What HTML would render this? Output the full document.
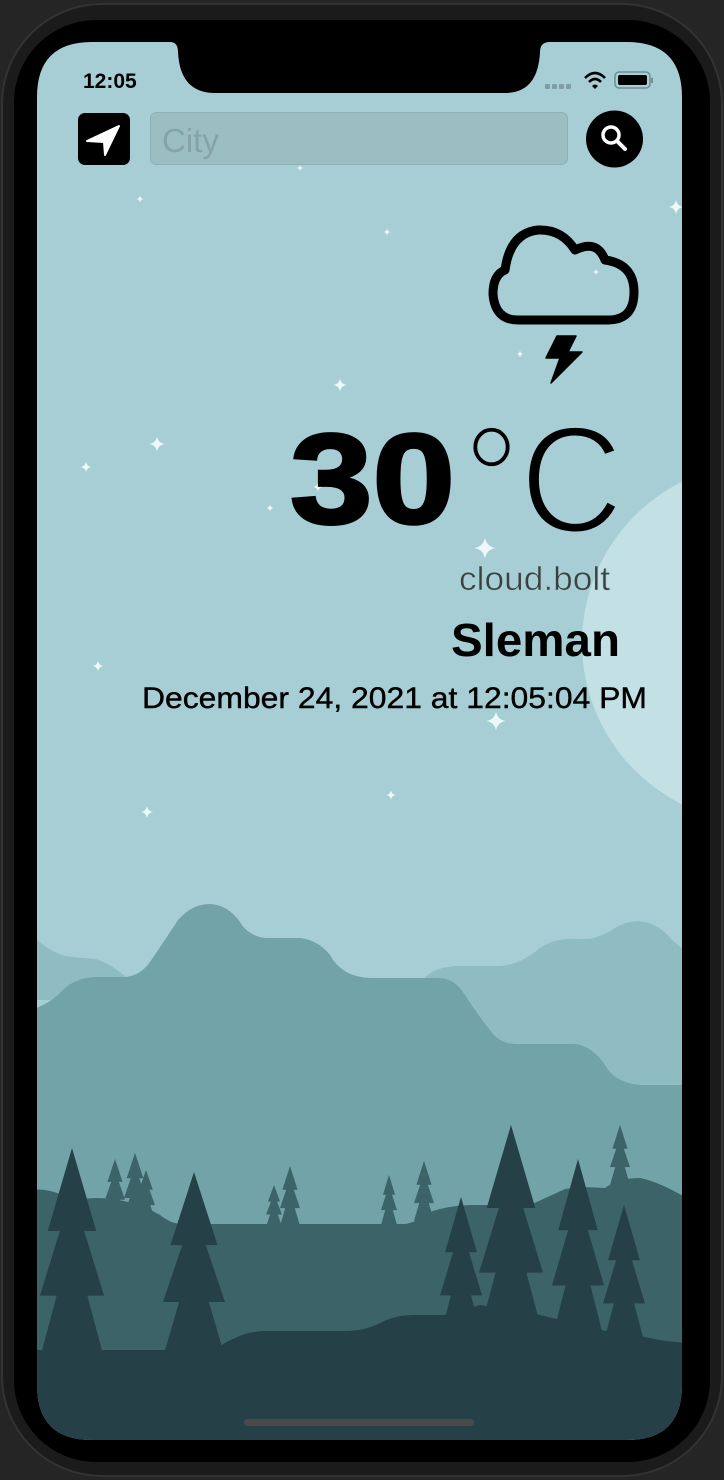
<!DOCTYPE html>
<html><head><meta charset="utf-8"><style>
html,body{margin:0;padding:0;background:#222;}
svg{display:block}
</style></head><body>
<svg width="724" height="1480" viewBox="0 0 724 1480" xmlns="http://www.w3.org/2000/svg">
<defs>
<clipPath id="scr">
<path d="M92,42 H170 Q178,42 178,52 Q180,93 215,93 H505 Q538,93 540,52 Q540,42 550,42 H627 Q682,42 682,97 V1385 Q682,1440 627,1440 H92 Q37,1440 37,1385 V97 Q37,42 92,42 Z"/>
</clipPath>
<path id="t" d="M0,0 L0.38,0.395 L0.19,0.395 L0.5,0.703 L0.24,0.703 L0.5,1 L-0.5,1 L-0.24,0.703 L-0.5,0.703 L-0.19,0.395 L-0.38,0.395 Z"/>
<path id="s" d="M0,-6 Q0.8,-0.8 6,0 Q0.8,0.8 0,6 Q-0.8,0.8 -6,0 Q-0.8,-0.8 0,-6 Z"/>
</defs>
<rect width="724" height="1480" fill="#252525"/>
<rect x="2" y="4" width="720" height="1472" rx="100" fill="#1b1b1b" stroke="#333" stroke-width="2"/>
<rect x="14" y="20" width="696" height="1442" rx="82" fill="#000"/>
<g clip-path="url(#scr)">
<rect x="30" y="40" width="660" height="1410" fill="#a6ced4"/>
<circle cx="762" cy="643" r="180" fill="#c3e1e5"/>
<g fill="#eef8f9">
<use href="#s" transform="translate(300,168) scale(0.5)"/>
<use href="#s" transform="translate(140,199) scale(0.6)"/>
<use href="#s" transform="translate(387,232) scale(0.6)"/>
<use href="#s" transform="translate(676,207) scale(1.2)"/>
<use href="#s" transform="translate(520,122) scale(0.6)"/>
<use href="#s" transform="translate(340,385) scale(1.1)"/>
<use href="#s" transform="translate(157,444) scale(1.3)"/>
<use href="#s" transform="translate(86,467) scale(0.9)"/>
<use href="#s" transform="translate(270,508) scale(0.6)"/>
<use href="#s" transform="translate(520,354) scale(0.6)"/>
<use href="#s" transform="translate(596,272) scale(0.5)"/>
<use href="#s" transform="translate(485,548) scale(1.8)"/>
<use href="#s" transform="translate(98,666) scale(0.9)"/>
<use href="#s" transform="translate(496,721) scale(1.6)"/>
<use href="#s" transform="translate(147,812) scale(1)"/>
<use href="#s" transform="translate(391,795) scale(0.8)"/>
<use href="#s" transform="translate(318,487) scale(0.8)"/>
</g>
<path d="M30,932 Q45,950 65,956 Q80,958 95,959 Q108,962 125,976 V1000 H30 Z" fill="#8fbbc2"/>
<path d="M420,985 Q428,968 455,966 H500 Q520,965 540,948 Q555,938 575,939 H590 Q605,935 615,928 Q630,919 645,922 Q660,925 672,940 L690,955 V1100 H420 Z" fill="#8fbbc2"/>
<path d="M30,1010 Q45,1006 58,995 Q72,978 95,977 H125 Q140,976 150,962 Q165,940 178,920 Q192,904 210,904 Q228,905 240,922 Q248,936 265,938 H300 Q318,940 330,955 Q342,977 370,978 H440 Q455,979 465,995 Q480,1018 490,1030 Q498,1043 515,1044 H575 Q592,1046 605,1065 Q615,1083 640,1085 H690 V1300 H30 Z" fill="#72a3a8"/>
<g fill="#3b6368">
<use href="#t" transform="translate(115,1159) scale(20,58)"/>
<use href="#t" transform="translate(135,1153) scale(22,64)"/>
<use href="#t" transform="translate(146,1170) scale(18,50)"/>
<use href="#t" transform="translate(274,1185) scale(16,42)"/>
<use href="#t" transform="translate(290,1166) scale(20,60)"/>
<use href="#t" transform="translate(389,1175) scale(16,50)"/>
<use href="#t" transform="translate(424,1161) scale(20,60)"/>
<use href="#t" transform="translate(620,1125) scale(20,60)"/>
</g>
<path d="M30,1190 Q45,1188 60,1194 Q78,1200 95,1198 Q130,1198 160,1215 Q170,1223 180,1224 H405 Q418,1222 430,1212 Q450,1205 475,1205 H530 Q550,1196 565,1189 Q580,1186 605,1188 Q618,1178 640,1178 Q660,1182 690,1200 V1400 H30 Z" fill="#3b6368"/>
<g fill="#264047">
<use href="#t" transform="translate(72,1148) scale(64,210)"/>
<use href="#t" transform="translate(194,1172) scale(62,185)"/>
<use href="#t" transform="translate(461,1197) scale(42,140)"/>
<use href="#t" transform="translate(511,1125) scale(64,210)"/>
<use href="#t" transform="translate(578,1159) scale(52,180)"/>
<use href="#t" transform="translate(624,1205) scale(42,140)"/>
</g>
<path d="M30,1350 H215 Q225,1342 235,1338 Q250,1331 265,1331 H345 Q365,1331 380,1323 Q395,1315 415,1315 H445 L480,1305 L540,1315 L600,1330 L645,1337 Q665,1342 690,1343 V1450 H30 Z" fill="#264047"/>
<rect x="244" y="1419" width="230" height="7" rx="3.5" fill="#4a4a4a"/>
</g>
<text x="83" y="88" font-family="Liberation Sans, sans-serif" font-weight="bold" font-size="21" fill="#000">12:05</text>
<g fill="#7f9da2"><rect x="545" y="84" width="5" height="5" rx="1"/><rect x="552" y="84" width="5" height="5" rx="1"/><rect x="559" y="84" width="5" height="5" rx="1"/><rect x="566" y="84" width="5" height="5" rx="1"/></g>
<path d="M585,78 Q595,68 605,78" stroke="#000" stroke-width="2.6" fill="none"/>
<path d="M589,82 Q595,76 601,82" stroke="#000" stroke-width="2.6" fill="none"/>
<path d="M592,86 L595,89 L598,86 Q595,83 592,86Z" fill="#000"/>
<rect x="615" y="72" width="35" height="16" rx="4" fill="none" stroke="#6f8f93" stroke-width="1.5"/>
<rect x="618" y="75" width="29" height="10" rx="2" fill="#000"/>
<rect x="651" y="78" width="2" height="5" fill="#6f8f93"/>
<rect x="78" y="113" width="52" height="52" rx="7" fill="#000"/>
<path d="M87,141 L119,126 L105,155 L104,142 Z" fill="#fff" stroke="#fff" stroke-width="2" stroke-linejoin="round"/>
<rect x="150.5" y="112.5" width="417" height="52" rx="6" fill="#9bbec3" stroke="#8db0b5"/>
<text x="162" y="152" font-family="Liberation Sans, sans-serif" font-size="33" fill="#86a4a8">City</text>
<circle cx="614.5" cy="139" r="28.5" fill="#000"/>
<circle cx="611" cy="135" r="8" fill="none" stroke="#fff" stroke-width="3.5"/>
<path d="M617,141 L625,149" stroke="#fff" stroke-width="4" stroke-linecap="round"/>
<path d="M518,320 H608 Q634,320 634,292 Q634,264 605,260 Q597,239 575,250 Q562,229 538,230 Q510,233 505,270 Q493,275 493,294 Q495,320 518,320 Z" fill="none" stroke="#000" stroke-width="9" stroke-linejoin="round"/>
<path d="M557,336 L576,336 L568,352 L582,352 L551,383 L560,358 L546,358 Z" fill="#000" stroke="#000" stroke-width="1.5" stroke-linejoin="round"/>
<text x="290" y="523" font-family="Liberation Sans, sans-serif" font-weight="900" font-size="128" fill="#000" stroke="#000" stroke-width="3" textLength="165" lengthAdjust="spacingAndGlyphs">30</text>
<text x="463" y="532" font-family="Liberation Sans, sans-serif" font-size="152" fill="#000" stroke="#a6ced4" stroke-width="4" textLength="160" lengthAdjust="spacingAndGlyphs">°C</text>
<text x="459" y="590" font-family="Liberation Sans, sans-serif" font-size="33" fill="#3a3f40" stroke="#a6ced4" stroke-width="0.6" textLength="151" lengthAdjust="spacingAndGlyphs">cloud.bolt</text>
<text x="451" y="656" font-family="Liberation Sans, sans-serif" font-weight="bold" font-size="46" fill="#000" textLength="169" lengthAdjust="spacingAndGlyphs">Sleman</text>
<text x="142" y="708" font-family="Liberation Sans, sans-serif" font-size="30" fill="#000" textLength="505" lengthAdjust="spacingAndGlyphs" stroke="#000" stroke-width="0.4">December 24, 2021 at 12:05:04 PM</text>
</svg>
</body></html>
